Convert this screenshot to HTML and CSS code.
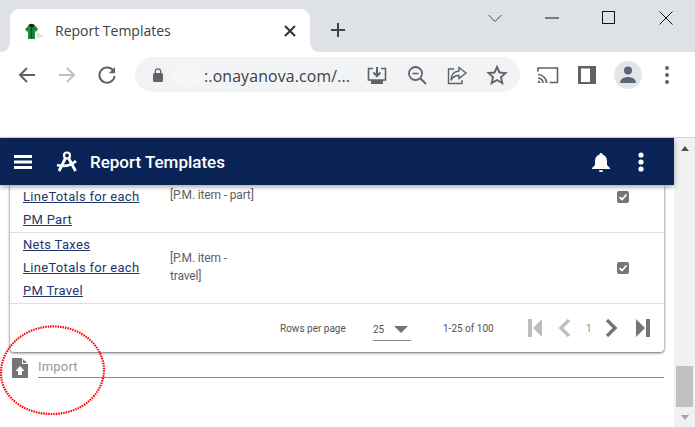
FILE: index.html
```html
<!DOCTYPE html>
<html lang="en">
<head>
<meta charset="utf-8">
<title>Report Templates</title>
<link rel="stylesheet" href="styles.css">
</head>
<body>
<header class="browser">
  <div class="tabstrip">
    <div class="tab">
      <svg class="favicon" viewBox="0 0 22 20" width="22" height="20"><path d="M13 10l8 6-7 1z" fill="#dfe3df"/><path d="M2 8l4-3.500h6l3 3.500-2 3-1-1v8H5v-8l-1 1z" fill="#1c8a3c"/><path d="M5 4.500a4 3.500 0 0 1 7 0L9 6.500z" fill="#222"/><path d="M8.500 7v10" stroke="#135" stroke-width="1.300"/></svg>
      <span class="tab-title">Report Templates</span>
      <svg class="tab-close" viewBox="0 0 12 12" width="12" height="12"><path d="M1 1l10 10M11 1L1 11" stroke="#333" stroke-width="2" fill="none"/></svg>
    </div>
    <svg class="new-tab" viewBox="0 0 16 16" width="16" height="16"><path d="M8 1v14M1 8h14" stroke="#444" stroke-width="2" fill="none"/></svg>
    <div class="window-controls">
      <svg viewBox="0 0 14 14" width="14" height="14"><path d="M.5 4l6.500 6.500L13.500 4" stroke="#444" fill="none"/></svg>
      <svg viewBox="0 0 14 14" width="14" height="14"><path d="M0 7h14" stroke="#111" fill="none"/></svg>
      <svg viewBox="0 0 14 14" width="14" height="14"><rect x=".5" y=".5" width="12" height="12" stroke="#111" fill="none"/></svg>
      <svg viewBox="0 0 14 14" width="14" height="14"><path d="M.5.5l13 13M13.500.5l-13 13" stroke="#111" fill="none"/></svg>
    </div>
  </div>
  <div class="toolbar">
    <svg class="tool" viewBox="0 0 24 24"><path d="M20 12H5M12 5l-7 7 7 7" stroke="#5f6368" stroke-width="2" fill="none"/></svg>
    <svg class="tool" viewBox="0 0 24 24"><path d="M4 12h15M12 5l7 7-7 7" stroke="#bdc1c6" stroke-width="2" fill="none"/></svg>
    <svg class="tool" viewBox="0 0 24 24"><path d="M18.400 8A7.600 7.600 0 1 0 19.600 13" stroke="#5f6368" stroke-width="2" fill="none"/><path d="M20 4v6.200h-6.200z" fill="#5f6368"/></svg>
    <div class="omnibox">
      <svg class="lock" viewBox="0 0 12 14" width="12" height="14"><rect x="1" y="5" width="10" height="9" rx="1.500" fill="#5f6368"/><path d="M3.300 5V3.500a2.700 2.700 0 0 1 5.400 0V5" stroke="#5f6368" stroke-width="1.300" fill="none"/></svg>
      <span class="blur"></span>
      <span class="url">:.onayanova.com/...</span>
      <svg class="tool" viewBox="0 0 24 24"><path d="M8 5.500H3.500V17h17V5.500H16" stroke="#5f6368" stroke-width="1.600" fill="none"/><path d="M12 4v9M8.500 9.500L12 13l3.500-3.500" stroke="#5f6368" stroke-width="2" fill="none"/><path d="M6 17h12v4H6z" fill="#5f6368"/></svg>
      <svg class="tool" viewBox="0 0 24 24"><circle cx="10.500" cy="10.500" r="6.500" stroke="#5f6368" stroke-width="1.800" fill="none"/><path d="M15.500 15.500l5.500 5.500" stroke="#5f6368" stroke-width="2" fill="none"/><path d="M7.500 10.500h6" stroke="#5f6368" stroke-width="1.600"/></svg>
      <svg class="tool" viewBox="0 0 24 24"><path d="M9 6H3.500v14.500H17V17M14 4.500l7 5.500-7 5.500v-3c-4 0-6.500 1.500-8 5 0-5.500 3-9 8-9.500z" stroke="#5f6368" stroke-width="1.400" fill="none"/></svg>
      <svg class="tool" viewBox="0 0 24 24"><path d="M12 4l2.500 5.500 6 .6-4.500 4 1.300 6L12 17l-5.300 3.100 1.300-6-4.500-4 6-.6z" stroke="#5f6368" stroke-width="1.900" fill="none"/></svg>
    </div>
    <svg class="tool" viewBox="0 0 24 24"><path d="M2 8.500V5h19.500v14.500h-8" stroke="#5f6368" stroke-width="1.600" fill="none"/><path d="M2 11.500a8.500 8.500 0 0 1 8.500 8.500M2 15a5 5 0 0 1 5 5" stroke="#5f6368" stroke-width="1.700" fill="none"/><path d="M2 17.500a2.500 2.500 0 0 1 2.500 2.500H2z" fill="#5f6368"/></svg>
    <svg class="tool" viewBox="0 0 24 24"><rect x="2" y="3" width="18" height="18" fill="#5f6368"/><rect x="5" y="5.500" width="9" height="13.500" fill="#fff"/></svg>
    <span class="avatar"><svg viewBox="0 0 20 20" width="20" height="20"><circle cx="10" cy="5.500" r="4" fill="#5b6579"/><path d="M2 18c0-4 4-6 8-6s8 2 8 6z" fill="#5b6579"/></svg></span>
    <svg class="tool" viewBox="0 0 24 24"><circle cx="12" cy="5" r="2" fill="#5f6368"/><circle cx="12" cy="12" r="2" fill="#5f6368"/><circle cx="12" cy="19" r="2" fill="#5f6368"/></svg>
  </div>
</header>

<div class="page">
  <div class="main">
    <div class="appbar">
      <svg class="menu" viewBox="0 0 18 14" width="18" height="14"><path d="M0 1.500h18M0 7h18M0 12.500h18" stroke="#fff" stroke-width="3"/></svg>
      <svg class="logo" viewBox="0 0 22 22" width="22" height="22"><circle cx="11" cy="4.500" r="3" stroke="#fff" stroke-width="2.200" fill="none"/><path d="M9.500 7L3 20M12.500 7l7 13M1 14c7 2 14 .5 19-4" stroke="#fff" stroke-width="2.800" fill="none"/></svg>
      <h1 class="app-title">Report Templates</h1>
      <svg class="bell" viewBox="0 0 18 20" width="18" height="20"><path d="M9 1c1 0 1.500.7 1.500 1.500C13.500 3.400 15 6 15 9v4l3 3v1H0v-1l3-3V9c0-3 1.500-5.600 4.500-6.500C7.500 1.700 8 1 9 1z" fill="#fff"/><path d="M7 18.200h4a2 2 0 0 1-4 0z" fill="#fff"/></svg>
      <svg class="more" viewBox="0 0 6 20" width="6" height="20"><circle cx="3" cy="3" r="2.600" fill="#fff"/><circle cx="3" cy="10" r="2.600" fill="#fff"/><circle cx="3" cy="17" r="2.600" fill="#fff"/></svg>
    </div>
    <section class="card">
      <div class="row row-short">
        <div class="name"><a href="#">LineTotals for each</a><br><a href="#">PM Part</a></div>
        <div class="type type-top">[P.M. item - part]</div>
        <span class="check"><svg viewBox="0 0 12 12" width="12" height="12"><path d="M2.500 6.200l2.500 2.300 4.500-5" stroke="#fff" stroke-width="1.700" fill="none"/></svg></span>
      </div>
      <div class="row row-tall">
        <div class="name"><a href="#">Nets Taxes</a><br><a href="#">LineTotals for each</a><br><a href="#">PM Travel</a></div>
        <div class="type type-wrap">[P.M. item - travel]</div>
        <span class="check"><svg viewBox="0 0 12 12" width="12" height="12"><path d="M2.500 6.200l2.500 2.300 4.500-5" stroke="#fff" stroke-width="1.700" fill="none"/></svg></span>
      </div>
      <div class="pager">
        <span class="pager-label">Rows per page</span>
        <span class="select"><span>25</span><svg viewBox="0 0 14 7" width="14" height="7"><path d="M0 0h14L7 7z" fill="#757575"/></svg></span>
        <span class="range">1-25 of 100</span>
        <svg class="first" viewBox="0 0 14 18" width="14" height="18"><path d="M0 0h4v18H0zM14 0v18L5 9z" fill="#bdbdbd"/></svg>
        <svg class="prev" viewBox="0 0 14 18" width="14" height="18"><path d="M11 1L3 9l8 8" stroke="#bdbdbd" stroke-width="3.400" fill="none"/></svg>
        <span class="page-no">1</span>
        <svg class="next" viewBox="0 0 14 18" width="14" height="18"><path d="M2 1l8 8-8 8" stroke="#757575" stroke-width="3.400" fill="none"/></svg>
        <svg class="last" viewBox="0 0 14 18" width="14" height="18"><path d="M0 0l9 9-9 9zM10 0h4v18h-4z" fill="#757575"/></svg>
      </div>
    </section>
    <div class="import">
      <svg class="import-icon" viewBox="0 0 16 20" width="16" height="20"><path d="M0 0h10l6 6v14H0z" fill="#757575"/><path d="M10.500 0v5.500H16" stroke="#fff" fill="none"/><path d="M8 8l-4.500 5H6v4h4v-4h2.500z" fill="#fff"/></svg>
      <div class="import-field">Import</div>
    </div>
  </div>
  <aside class="scrollbar">
    <span class="arrow-up"></span>
    <span class="thumb"></span>
    <span class="arrow-down"></span>
  </aside>
</div>

<svg class="annotation" viewBox="0 0 110 92" width="110" height="92"><path d="M50 1.500C80 0 103 20 104 44c0 25-22 45-52 45C24 89 1 72 1 48 1 24 22 3 50 1.500z" stroke="#f00" stroke-width="2.200" stroke-dasharray="1.500 1" fill="none"/></svg>
</body>
</html>
```

FILE: styles.css
```css
* { box-sizing: border-box; }
html, body { margin: 0; height: 100%; }
body {
  position: relative;
  width: 695px;
  height: 427px;
  overflow: hidden;
  background: #fff;
  font-family: Roboto, sans-serif;
}

.browser { height: 138px; border-bottom: 1px solid #d6d6d6; }

.tabstrip {
  display: flex;
  height: 52px;
  padding: 9px 0 0 10px;
  background: #dee1e6;
}
.tab {
  position: relative;
  display: flex;
  align-items: center;
  width: 300px;
  height: 43px;
  padding: 0 14px 0 13px;
  background: #fff;
  border-radius: 9px 9px 0 0;
}
.tab::before, .tab::after {
  content: "";
  position: absolute;
  bottom: 0;
  width: 9px;
  height: 9px;
}
.tab::before { left: -9px; background: radial-gradient(circle at 0 0, #dee1e6 8.500px, #fff 9px); }
.tab::after { right: -9px; background: radial-gradient(circle at 100% 0, #dee1e6 8.500px, #fff 9px); }
.favicon { flex: none; }
.tab-title {
  flex: 1;
  margin-left: 10px;
  font: 14px "Open Sans", sans-serif;
  color: #3c4043;
}
.tab-close { flex: none; }
.new-tab { flex: none; margin: 13px 0 0 20px; }

.window-controls {
  display: flex;
  gap: 43px;
  margin: 2px 0 0 auto;
  padding-right: 22px;
}
.window-controls svg { flex: none; }

.toolbar {
  display: flex;
  align-items: center;
  gap: 16px;
  height: 45px;
  padding-left: 15px;
}
.tool { flex: none; width: 24px; height: 24px; }

.omnibox {
  display: flex;
  align-items: center;
  gap: 16px;
  flex: none;
  width: 385px;
  height: 35px;
  padding: 0 10px 0 17px;
  background: #f1f3f4;
  border-radius: 18px;
}
.lock { flex: none; }
.blur {
  flex: none;
  width: 32px;
  height: 25px;
  margin-left: -8px;
  border-radius: 50%;
  background: radial-gradient(circle, #dfe2e5 .5px, #fff .8px) 0 0 / 2px 2px;
}
.url {
  flex: none;
  width: 147px;
  margin: 2px -2px 0 -16px;
  font: 15.800px "Open Sans", sans-serif;
  letter-spacing: .17px;
  color: #3c4043;
  white-space: nowrap;
}
.avatar {
  flex: none;
  display: flex;
  align-items: center;
  justify-content: center;
  width: 28px;
  height: 28px;
  margin: 0 -3px 0 -2px;
  border-radius: 50%;
  background: #e3e5e9;
}

.page { display: flex; height: 289px; }
.main { flex: 1; min-width: 0; }

.appbar {
  position: relative;
  z-index: 1;
  display: flex;
  align-items: center;
  height: 47px;
  padding: 0 30px 0 14px;
  background: #0a2458;
  box-shadow: 0 2px 5px rgba(0, 0, 0, .35);
}
.menu { flex: none; }
.logo { flex: none; margin-left: 24px; }
.app-title {
  flex: 1;
  margin: 0 0 0 12px;
  font-size: 17px;
  font-weight: 500;
  color: #fff;
}
.bell { flex: none; }
.more { flex: none; margin-left: 28px; }

.card {
  margin: 0 10px;
  background: #fff;
  border-radius: 0 0 4px 4px;
  box-shadow: 0 1px 3px rgba(0, 0, 0, .55), 0 0 2px rgba(0, 0, 0, .25);
}
.row {
  display: grid;
  grid-template-columns: 147px 70px 1fr 13px;
  padding: 0 34px 0 13px;
  border-bottom: 1px solid #e0e0e0;
  font-size: 13px;
}
.row-short { height: 48px; }
.row-tall { height: 71px; align-items: center; }
.name { line-height: 23px; letter-spacing: .3px; align-self: start; }
.name a { color: #22376b; }
.type {
  grid-column: 2;
  font-size: 12px;
  line-height: 18px;
  letter-spacing: -.15px;
  color: #616161;
}
.type-top { white-space: nowrap; margin-top: 1px; }
.type-wrap { align-self: start; margin-top: 16px; }
.check {
  grid-column: 4;
  display: flex;
  align-items: center;
  justify-content: center;
  width: 12px;
  height: 12px;
  margin-top: 6px;
  background: #757575;
  border-radius: 2px;
}
.row-tall .check { margin-top: 0; }

.pager {
  display: flex;
  align-items: center;
  height: 48px;
  padding-left: 270px;
  font-size: 10px;
  color: #555;
}
.pager-label { width: 93px; flex: none; }
.select {
  display: flex;
  align-items: center;
  justify-content: space-between;
  width: 38px;
  height: 22px;
  padding-right: 3px;
  margin-top: 4px;
  border-bottom: 1px solid #8a8a8a;
  flex: none;
}
.range { width: 85px; margin-left: 32px; flex: none; }
.first, .prev, .next, .last { flex: none; }
.prev { margin-left: 16px; }
.page-no { width: 33px; flex: none; padding-left: 14px; color: #888; }
.last { margin-left: 17px; }

.import {
  display: flex;
  align-items: flex-start;
  gap: 10px;
  padding: 6px 10px 0 12px;
}
.import-icon { flex: none; }
.import-field {
  flex: 1;
  height: 20px;
  font-size: 13px;
  line-height: 18px;
  letter-spacing: .2px;
  color: #9a9a9a;
  border-bottom: 1px solid #8a8a8a;
}

.scrollbar {
  display: flex;
  flex-direction: column;
  align-items: center;
  flex: none;
  width: 21px;
  background: #f1f1f1;
}
.arrow-up {
  margin-top: 8px;
  border: 4.500px solid transparent;
  border-top: 0;
  border-bottom: 5px solid #505050;
}
.thumb {
  width: 17px;
  height: 41px;
  margin-top: auto;
  background: #c1c1c1;
}
.arrow-down {
  margin: 8px 0 7px;
  border: 4.500px solid transparent;
  border-bottom: 0;
  border-top: 5px solid #a3a3a3;
}

.annotation { position: absolute; left: 0; top: 325px; }
```
